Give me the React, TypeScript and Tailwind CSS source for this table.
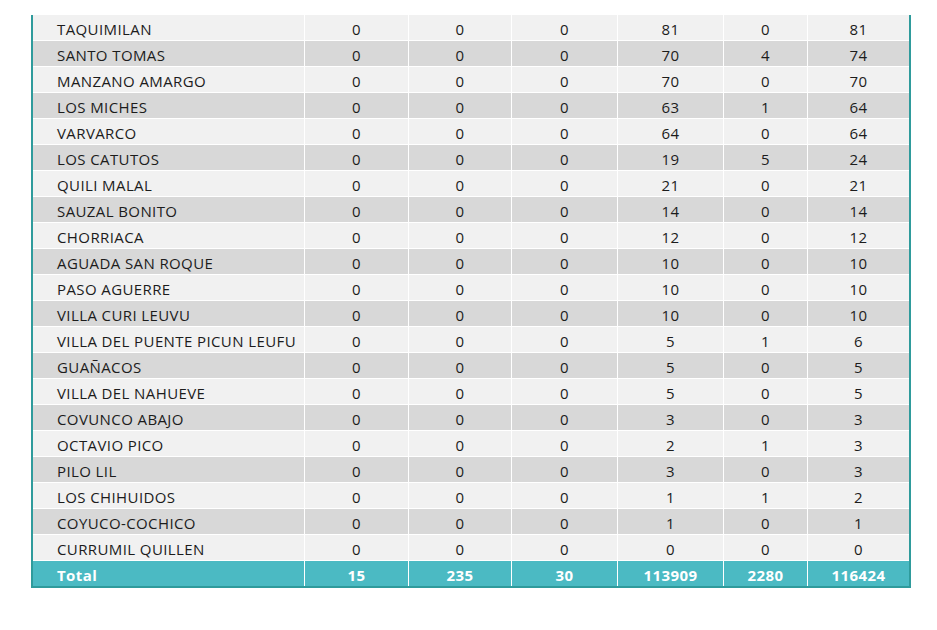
import React from 'react';

type Row = [string, number, number, number, number, number, number];

const rows: Row[] = [
  ['TAQUIMILAN', 0, 0, 0, 81, 0, 81],
  ['SANTO TOMAS', 0, 0, 0, 70, 4, 74],
  ['MANZANO AMARGO', 0, 0, 0, 70, 0, 70],
  ['LOS MICHES', 0, 0, 0, 63, 1, 64],
  ['VARVARCO', 0, 0, 0, 64, 0, 64],
  ['LOS CATUTOS', 0, 0, 0, 19, 5, 24],
  ['QUILI MALAL', 0, 0, 0, 21, 0, 21],
  ['SAUZAL BONITO', 0, 0, 0, 14, 0, 14],
  ['CHORRIACA', 0, 0, 0, 12, 0, 12],
  ['AGUADA SAN ROQUE', 0, 0, 0, 10, 0, 10],
  ['PASO AGUERRE', 0, 0, 0, 10, 0, 10],
  ['VILLA CURI LEUVU', 0, 0, 0, 10, 0, 10],
  ['VILLA DEL PUENTE PICUN LEUFU', 0, 0, 0, 5, 1, 6],
  ['GUAÑACOS', 0, 0, 0, 5, 0, 5],
  ['VILLA DEL NAHUEVE', 0, 0, 0, 5, 0, 5],
  ['COVUNCO ABAJO', 0, 0, 0, 3, 0, 3],
  ['OCTAVIO PICO', 0, 0, 0, 2, 1, 3],
  ['PILO LIL', 0, 0, 0, 3, 0, 3],
  ['LOS CHIHUIDOS', 0, 0, 0, 1, 1, 2],
  ['COYUCO-COCHICO', 0, 0, 0, 1, 0, 1],
  ['CURRUMIL QUILLEN', 0, 0, 0, 0, 0, 0],
];

const totals = [15, 235, 30, 113909, 2280, 116424];

const grid = 'grid grid-cols-[271px_104px_103px_106px_106px_84px_102px]';

export default function App() {
  return (
    <div className="min-h-[630px] w-[937px] bg-white pt-[15px] font-['Open_Sans',sans-serif] text-[15px] tracking-[0.4px] text-[#1c1c1c]">
      <div className="ml-[31px] w-[880px] border-x-2 border-b-2 border-[#2f9b9c]">
        {rows.map((r, i) => (
          <div
            key={r[0]}
            className={`${grid} h-[26px] border-b border-white ${i % 2 === 0 ? 'bg-[#f1f1f1]' : 'bg-[#d8d8d8]'}`}
          >
            <div className="flex items-center pl-6 pt-[3px] leading-none">{r[0]}</div>
            {r.slice(1).map((v, j) => (
              <div key={j} className="flex items-center justify-center border-l border-white pt-[3px] leading-none">
                {v}
              </div>
            ))}
          </div>
        ))}
        <div className={`${grid} h-[25px] bg-[#4bbac3] font-bold text-white`}>
          <div className="flex items-center pl-6 pt-[3px] leading-none">Total</div>
          {totals.map((v, j) => (
            <div key={j} className="flex items-center justify-center border-l border-white pt-[3px] leading-none">
              {v}
            </div>
          ))}
        </div>
      </div>
    </div>
  );
}
